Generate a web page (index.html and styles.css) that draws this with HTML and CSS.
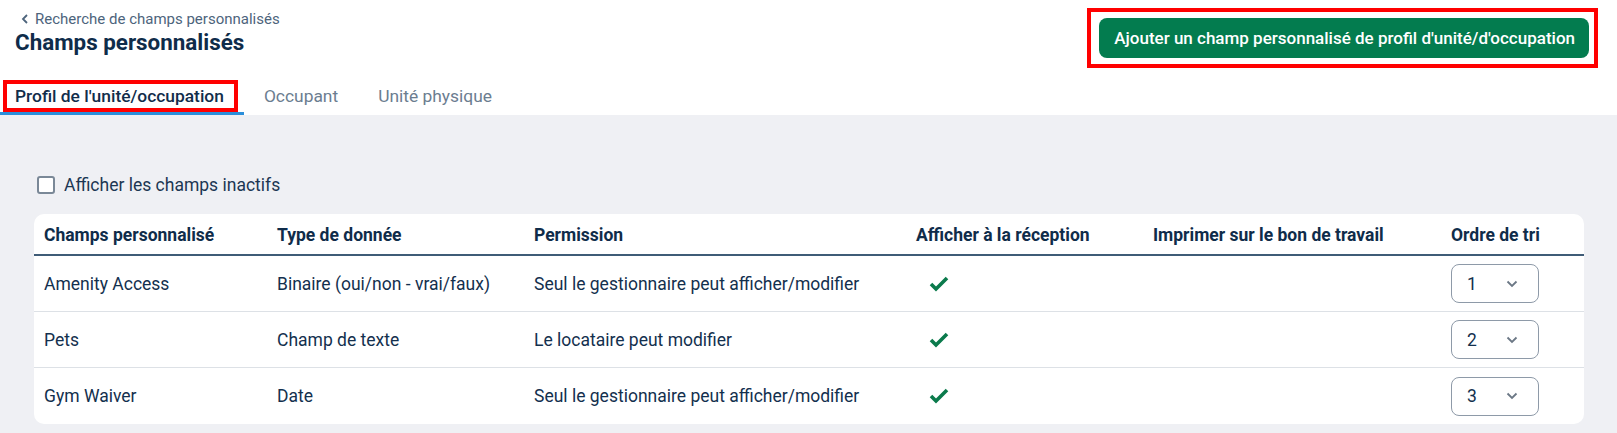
FILE: index.html
```html
<!DOCTYPE html>
<html lang="fr">
<head>
<meta charset="utf-8">
<title>Champs personnalisés</title>
<link rel="stylesheet" href="styles.css">
</head>
<body>
<div class="top">
  <div class="header">
    <div class="header-left">
      <a class="back" href="#">
        <svg class="back-icon" width="8" height="10" viewBox="0 0 8 10"><polyline points="6,1 2,5 6,9" fill="none" stroke="currentColor" stroke-width="1.8"/></svg>
        <span>Recherche de champs personnalisés</span>
      </a>
      <h1 class="title">Champs personnalisés</h1>
    </div>
    <div class="annot-btn">
      <button class="btn-primary" type="button">Ajouter un champ personnalisé de profil d'unité/d'occupation</button>
    </div>
  </div>
  <nav class="tabs">
    <div class="tab active"><span class="tab-label annot-tab">Profil de l'unité/occupation</span></div>
    <div class="tab"><span class="tab-label">Occupant</span></div>
    <div class="tab"><span class="tab-label">Unité physique</span></div>
  </nav>
</div>
<main class="content">
  <label class="check-row"><span class="checkbox"></span><span>Afficher les champs inactifs</span></label>
  <div class="card">
    <div class="row head">
      <div class="cell">Champs personnalisé</div>
      <div class="cell">Type de donnée</div>
      <div class="cell">Permission</div>
      <div class="cell">Afficher à la réception</div>
      <div class="cell">Imprimer sur le bon de travail</div>
      <div class="cell">Ordre de tri</div>
    </div>
    <div class="row">
      <div class="cell">Amenity Access</div>
      <div class="cell">Binaire (oui/non - vrai/faux)</div>
      <div class="cell">Seul le gestionnaire peut afficher/modifier</div>
      <div class="cell"><svg class="check" width="20" height="16" viewBox="0 0 20 16"><polyline points="2,8 7,13 18,2" fill="none" stroke="currentColor" stroke-width="3.6"/></svg></div>
      <div class="cell"></div>
      <div class="cell"><div class="select"><span>1</span><svg class="chev" width="12" height="8" viewBox="0 0 12 8"><polyline points="1.5,1.5 6,6 10.5,1.5" fill="none" stroke="currentColor" stroke-width="1.8"/></svg></div></div>
    </div>
    <div class="row">
      <div class="cell">Pets</div>
      <div class="cell">Champ de texte</div>
      <div class="cell">Le locataire peut modifier</div>
      <div class="cell"><svg class="check" width="20" height="16" viewBox="0 0 20 16"><polyline points="2,8 7,13 18,2" fill="none" stroke="currentColor" stroke-width="3.6"/></svg></div>
      <div class="cell"></div>
      <div class="cell"><div class="select"><span>2</span><svg class="chev" width="12" height="8" viewBox="0 0 12 8"><polyline points="1.5,1.5 6,6 10.5,1.5" fill="none" stroke="currentColor" stroke-width="1.8"/></svg></div></div>
    </div>
    <div class="row">
      <div class="cell">Gym Waiver</div>
      <div class="cell">Date</div>
      <div class="cell">Seul le gestionnaire peut afficher/modifier</div>
      <div class="cell"><svg class="check" width="20" height="16" viewBox="0 0 20 16"><polyline points="2,8 7,13 18,2" fill="none" stroke="currentColor" stroke-width="3.6"/></svg></div>
      <div class="cell"></div>
      <div class="cell"><div class="select"><span>3</span><svg class="chev" width="12" height="8" viewBox="0 0 12 8"><polyline points="1.5,1.5 6,6 10.5,1.5" fill="none" stroke="currentColor" stroke-width="1.8"/></svg></div></div>
    </div>
  </div>
</main>
</body>
</html>
```
FILE: styles.css
```css
* { box-sizing: border-box; }
html, body {
  margin: 0;
  padding: 0;
  background: #eff0f4;
  font-family: Roboto, "Liberation Sans", sans-serif;
  color: #15314f;
}
.top {
  background: #ffffff;
}
.header {
  display: flex;
  justify-content: space-between;
  align-items: flex-start;
  padding: 9px 23px 0 15px;
}
.header-left {
  display: flex;
  flex-direction: column;
}
.back {
  display: flex;
  align-items: center;
  height: 20px;
  color: #4d647c;
  font-size: 15px;
  text-decoration: none;
  padding-left: 6px;
}
.back-icon {
  margin-right: 6px;
}
.title {
  margin: 0;
  font-size: 22.4px;
  line-height: 26px;
  font-weight: 700;
  color: #0f2c4a;
}
.annot-btn {
  margin-top: 3px;
  padding: 6px 5px 6px 8px;
  outline: 4px solid #ff0000;
}
.btn-primary {
  display: block;
  height: 40px;
  padding: 0 14px 0 15px;
  border: none;
  border-radius: 8px;
  background: #037c4f;
  color: #ffffff;
  font-family: Roboto, "Liberation Sans", sans-serif;
  font-size: 17px;
  font-weight: 500;
}
.tabs {
  display: flex;
  margin-top: 15px;
}
.tab {
  height: 36px;
  padding: 5px 20px 0;
  border-bottom: 3px solid transparent;
  font-size: 17.4px;
  color: #6b7d90;
}
.tab:first-child {
  padding-left: 15px;
}
.tab-label {
  display: inline-block;
  padding-top: 2px;
  line-height: 20px;
}
.tab.active {
  border-bottom-color: #2b8fdb;
  color: #112d4b;
  font-weight: 500;
}
.annot-tab {
  padding: 2px 10px 2px 8px;
  margin: 0 -10px 0 -8px;
  outline: 4px solid #ff0000;
}
.content {
  padding: 61px 33px 10px 34px;
}
.check-row {
  display: flex;
  align-items: center;
  height: 18px;
  font-size: 17.5px;
  color: #1c3753;
}
.checkbox {
  width: 18px;
  height: 18px;
  margin: 0 9px 0 3px;
  border: 2px solid #7a8897;
  border-radius: 3px;
  background: #ffffff;
}
.card {
  margin-top: 20px;
  background: #ffffff;
  border-radius: 10px;
  overflow: hidden;
}
.row {
  display: grid;
  grid-template-columns: 233px 257px 382px 237px 298px 1fr;
  height: 56px;
  border-bottom: 1px solid #dde1e6;
  align-items: center;
  font-size: 17.5px;
  color: #13304e;
}
.row:last-child {
  border-bottom: none;
  height: 56px;
}
.row.head {
  height: 42px;
  border-bottom: 2px solid #3f5c77;
  font-weight: 700;
  color: #0f2c4a;
  padding-top: 1px;
}
.cell {
  padding: 0 10px;
  white-space: nowrap;
}
.check {
  display: block;
  margin-left: 13px;
  color: #0b7a4c;
}
.select {
  display: flex;
  align-items: center;
  justify-content: space-between;
  width: 88px;
  height: 39px;
  padding: 0 20px 0 15px;
  border: 1px solid #8e9aa8;
  border-radius: 8px;
  color: #13304e;
}
.chev {
  color: #6b7785;
}
```
